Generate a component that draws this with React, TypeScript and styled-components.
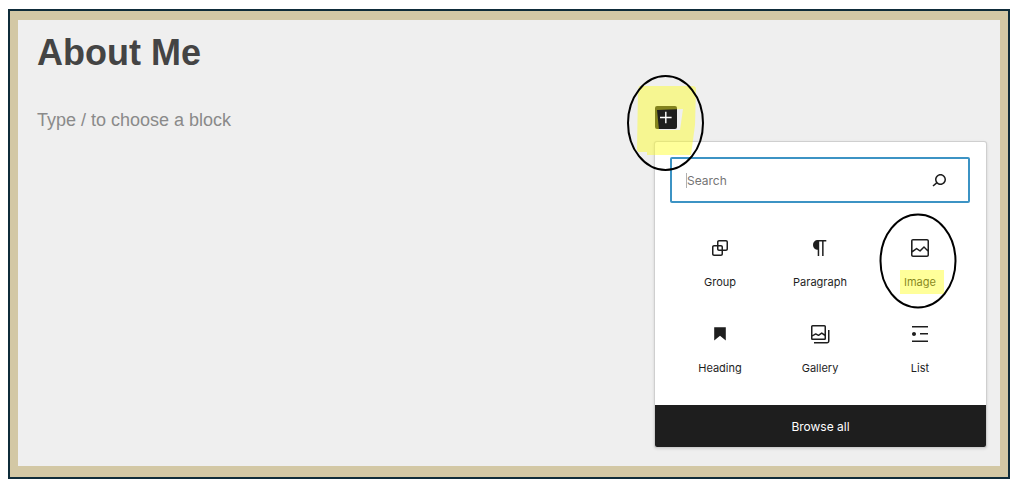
import React from "react";
import styled, { createGlobalStyle } from "styled-components";

const GlobalStyle = createGlobalStyle`
  *, *::before, *::after { box-sizing: border-box; }
  body {
    margin: 0;
    background: #ffffff;
    font-family: Inter, "Liberation Sans", sans-serif;
    color: #1e1e1e;
  }
`;

const ink = "#1e1e1e";
const marker = "rgba(255, 255, 30, 0.45)";

const Page = styled.div`
  padding: 9px 12px 10px 8px;
`;

const Frame = styled.div`
  border: 2px solid #0f2c3a;
  background: #d3c8a5;
  padding: 9px 8px 11px;
`;

const Editor = styled.main`
  background: #efefef;
  padding: 11px 14px 19px 19px;
`;

const Title = styled.h1`
  margin: 0 0 31px;
  font: bold 36px/44px "Liberation Sans", Arial, sans-serif;
  color: #444444;
`;

const BlockRow = styled.div`
  display: flex;
  align-items: flex-start;
  justify-content: space-between;
  gap: 24px;
`;

const Prompt = styled.p`
  margin: 0;
  font: 18px/28px "Liberation Sans", Arial, sans-serif;
  color: #8a8a8a;
`;

const Inserter = styled.div`
  display: flex;
  flex-direction: column;
  align-items: flex-start;
  gap: 13px;
  flex: 0 0 331px;
`;

const Annotated = styled.div`
  position: relative;
  display: flex;
`;

const AddButton = styled.button`
  display: flex;
  align-items: center;
  justify-content: center;
  width: 22px;
  height: 23px;
  padding: 0;
  border: 0;
  border-radius: 2px;
  background: ${ink};
  color: #ffffff;
`;

const ButtonMarks = styled.svg`
  position: absolute;
  z-index: 2;
  left: -29px;
  top: -32px;
  pointer-events: none;
`;

const Popover = styled.section`
  width: 100%;
  background: #ffffff;
  border-radius: 2px;
  box-shadow: 0 0 0 1px #cfcfcf, 0 1px 3px 1px rgba(0, 0, 0, 0.12);
`;

const PopoverBody = styled.div`
  padding: 15px 16px 11px 15px;
`;

const SearchBox = styled.label`
  display: flex;
  align-items: center;
  height: 46px;
  padding: 0 17px 0 14px;
  border: 2px solid #3c93c4;
  border-radius: 2px;
`;

const Caret = styled.span`
  width: 1px;
  height: 15px;
  background: #b0b0b0;
`;

const SearchInput = styled.input`
  flex: 1;
  min-width: 0;
  padding: 2px 0 0;
  border: 0;
  outline: 0;
  background: transparent;
  font: 12px/16px Inter, "Liberation Sans", sans-serif;
  color: ${ink};
  &::placeholder {
    color: #757575;
    opacity: 1;
  }
`;

const BlockGrid = styled.div`
  display: grid;
  grid-template-columns: repeat(3, 1fr);
  margin-top: 19px;
`;

const BlockButton = styled.button`
  position: relative;
  display: flex;
  flex-direction: column;
  align-items: center;
  gap: 14px;
  padding: 14px 0 18px;
  border: 0;
  background: transparent;
  font: 11px/16px Inter, "Liberation Sans", sans-serif;
  color: ${ink};
`;

const TileMarks = styled.svg`
  position: absolute;
  left: 50%;
  top: -9px;
  margin-left: -41px;
  pointer-events: none;
`;

const BrowseAll = styled.button`
  display: block;
  width: 100%;
  height: 42px;
  padding: 2px 0 0;
  border: 0;
  border-radius: 0 0 2px 2px;
  background: ${ink};
  font: 12px/16px Inter, "Liberation Sans", sans-serif;
  color: #ffffff;
`;

const Icon = ({ d, size = 24 }: { d: string; size?: number }) => (
  <svg width={size} height={size} viewBox="0 0 24 24" fill="currentColor" fillRule="evenodd" aria-hidden="true">
    <path d={d} />
  </svg>
);

const searchPath =
  "M13.5 6C10.5 6 8 8.5 8 11.5c0 1.1.3 2.1.9 3l-3.4 3 1 1.1 3.4-2.9c1 .9 2.2 1.4 3.6 1.4 3 0 5.5-2.5 5.5-5.5C19 8.5 16.5 6 13.5 6zm0 9.5c-2.2 0-4-1.8-4-4s1.8-4 4-4 4 1.8 4 4-1.8 4-4 4z";

const blocks = [
  {
    name: "Group",
    d: "M18 4h-7c-1.1 0-2 .9-2 2v3H6c-1.1 0-2 .9-2 2v7c0 1.1.9 2 2 2h7c1.1 0 2-.9 2-2v-3h3c1.1 0 2-.9 2-2V6c0-1.1-.9-2-2-2zm-4.5 14c0 .3-.2.5-.5.5H6c-.3 0-.5-.2-.5-.5v-7c0-.3.2-.5.5-.5h3V13c0 1.1.9 2 2 2h2.5v3zm0-4.5H11c-.3 0-.5-.2-.5-.5v-2.5H13c.3 0 .5.2.5.5v2.5zm5-.5c0 .3-.2.5-.5.5h-3V11c0-1.1-.9-2-2-2h-2.5V6c0-.3.2-.5.5-.5h7c.3 0 .5.2.5.5v7z",
  },
  {
    name: "Paragraph",
    d: "M18.3 4H9.9v-.1l-.9.2c-2.3.4-4 2.4-4 4.8s1.7 4.4 4 4.8l.7.1V20h1.5V5.5h2.9V20h1.5V5.5h2.7V4z",
  },
  {
    name: "Image",
    marked: true,
    d: "M19 3H5c-1.1 0-2 .9-2 2v14c0 1.1.9 2 2 2h14c1.1 0 2-.9 2-2V5c0-1.1-.9-2-2-2zM5 4.5h14c.3 0 .5.2.5.5v8.4l-3-2.9c-.3-.3-.8-.3-1 0L11.9 14 9 12c-.3-.2-.6-.2-.8 0l-3.6 2.6V5c-.1-.3.1-.5.4-.5zm14 15H5c-.3 0-.5-.2-.5-.5v-2.4l4.1-3 3 1.9c.3.2.7.2.9-.1L16 12l3.5 3.4V19c0 .3-.2.5-.5.5z",
  },
  { name: "Heading", d: "M6.2 5.2v13.4l5.8-4.8 5.8 4.8V5.2z" },
  {
    name: "Gallery",
    d: "M16.375 4.5H4.625a.125.125 0 0 0-.125.125v8.254l2.859-1.54a.75.75 0 0 1 .68-.016l2.384 1.142 2.89-2.074a.75.75 0 0 1 .874 0l2.313 1.66V4.625a.125.125 0 0 0-.125-.125Zm.125 9.398-2.75-1.975-2.813 2.02a.75.75 0 0 1-.76.067l-2.444-1.17L4.5 14.583v1.792c0 .069.056.125.125.125h11.75a.125.125 0 0 0 .125-.125v-2.477ZM4.625 3C3.728 3 3 3.728 3 4.625v11.75C3 17.273 3.728 18 4.625 18h11.75c.898 0 1.625-.727 1.625-1.625V4.625C18 3.728 17.273 3 16.375 3H4.625ZM20 8v11c0 .69-.31 1-.999 1H6v1.5h13.001c1.52 0 2.499-.982 2.499-2.5V8H20Z",
  },
  {
    name: "List",
    d: "M4 4v1.5h16V4H4zm8 8.5h8V11h-8v1.5zM4 20h16v-1.5H4V20zm4-8c0-1.1-.9-2-2-2s-2 .9-2 2 .9 2 2 2 2-.9 2-2z",
  },
];

export default function App() {
  return (
    <>
      <GlobalStyle />
      <Page>
        <Frame>
          <Editor>
            <Title>About Me</Title>
            <BlockRow>
              <Prompt>Type / to choose a block</Prompt>
              <Inserter>
                <Annotated>
                  <AddButton aria-label="Add block">
                    <svg width="14" height="13" viewBox="0 0 14 13" stroke="currentColor" strokeWidth="1.4" aria-hidden="true">
                      <path d="M6.8 .8v11.4M1 6.5h11.6" />
                    </svg>
                  </AddButton>
                  <ButtonMarks width="80" height="98" viewBox="0 0 80 98" fill="none" aria-hidden="true">
                    <path
                      fill={marker}
                      fillRule="evenodd"
                      d="M13 12h53q4 0 4 3l-1 36-4 30H21v-3h-8q-2 0-2-3l1-58zM31 36l26-1-3 21H33z"
                    />
                    <ellipse cx="39.5" cy="49" rx="37.5" ry="47" stroke="#000000" strokeWidth="2" />
                  </ButtonMarks>
                </Annotated>
                <Popover aria-label="Block inserter">
                  <PopoverBody>
                    <SearchBox>
                      <Caret />
                      <SearchInput type="text" placeholder="Search" aria-label="Search" />
                      <Icon d={searchPath} />
                    </SearchBox>
                    <BlockGrid>
                      {blocks.map((block) => (
                        <BlockButton key={block.name}>
                          <Icon d={block.d} />
                          {block.name}
                          {block.marked && (
                            <TileMarks width="80" height="98" viewBox="0 0 80 98" fill="none" aria-hidden="true">
                              <path fill={marker} d="M21 57h44v24H21z" />
                              <ellipse cx="39" cy="48" rx="37.5" ry="46.5" stroke="#000000" strokeWidth="2" />
                            </TileMarks>
                          )}
                        </BlockButton>
                      ))}
                    </BlockGrid>
                  </PopoverBody>
                  <BrowseAll>Browse all</BrowseAll>
                </Popover>
              </Inserter>
            </BlockRow>
          </Editor>
        </Frame>
      </Page>
    </>
  );
}
